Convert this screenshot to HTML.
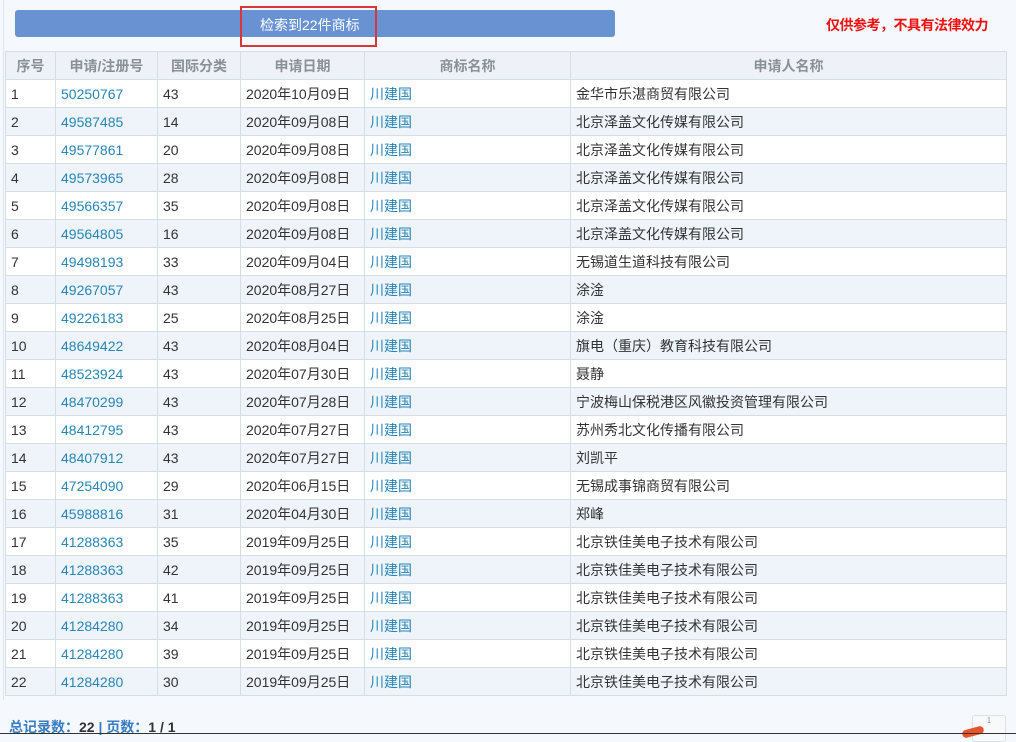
<!DOCTYPE html>
<html><head><meta charset="utf-8"><style>
body{margin:0;width:1016px;height:734px;background:#f5f8fc;font-family:"Liberation Sans","Noto Sans CJK SC",sans-serif;position:relative;overflow:hidden}
.edge{position:absolute;left:3px;top:0;width:1px;height:700px;background:#dfe4ea}
.bar{position:absolute;left:15px;top:10px;width:600px;height:27px;background:#6892d2;border-radius:3px}
.bar span{position:absolute;left:245px;top:5px;color:#fff;font-size:14px}
.rb{position:absolute;left:240px;top:6px;width:133px;height:37px;border:2px solid #d9363a}
.warn{position:absolute;left:826px;top:15px;color:#e11;font-size:14px;font-weight:bold;letter-spacing:-0.5px}
table{position:absolute;left:5px;top:51px;border-collapse:collapse;table-layout:fixed;width:1001px;font-size:14px;color:#333}
td,th{border:1px solid #d5dde6;height:27px;padding:0 0 0 5px;white-space:nowrap;overflow:hidden}
th{background:#eef2f8;color:#8a9099;font-weight:bold;text-align:center;padding:0;height:27px}
tbody tr:nth-child(even) td{background:#eef4fa}
tbody tr:nth-child(odd) td{background:#fff}
td.l{color:#2886b5}
.foot{position:absolute;left:9px;top:717px;font-size:14px;color:#3a7cc0;font-weight:bold}
.foot b{color:#333}
.pg{position:absolute;left:972px;top:715px;width:32px;height:25px;border:1px solid #dde2e8;border-radius:3px;background:#f8f9fb;font-size:8px;color:#999;text-align:center}
.line{position:absolute;left:0;top:733px;width:1016px;height:1px;background:#333}
.or{position:absolute;left:962px;top:728px;width:22px;height:8px;background:#e5542a;border-radius:6px;transform:rotate(-15deg)}
</style></head><body>
<div class="edge"></div>
<div class="bar"><span>检索到22件商标</span></div>
<div class="rb"></div>
<div class="warn">仅供参考，不具有法律效力</div>
<table>
<colgroup><col style="width:50px"><col style="width:102px"><col style="width:83px"><col style="width:124px"><col style="width:206px"><col style="width:436px"></colgroup>
<thead><tr><th>序号</th><th>申请/注册号</th><th>国际分类</th><th>申请日期</th><th>商标名称</th><th>申请人名称</th></tr></thead>
<tbody>
<tr><td>1</td><td class="l">50250767</td><td>43</td><td>2020年10月09日</td><td class="l">川建国</td><td>金华市乐湛商贸有限公司</td></tr>
<tr><td>2</td><td class="l">49587485</td><td>14</td><td>2020年09月08日</td><td class="l">川建国</td><td>北京泽盖文化传媒有限公司</td></tr>
<tr><td>3</td><td class="l">49577861</td><td>20</td><td>2020年09月08日</td><td class="l">川建国</td><td>北京泽盖文化传媒有限公司</td></tr>
<tr><td>4</td><td class="l">49573965</td><td>28</td><td>2020年09月08日</td><td class="l">川建国</td><td>北京泽盖文化传媒有限公司</td></tr>
<tr><td>5</td><td class="l">49566357</td><td>35</td><td>2020年09月08日</td><td class="l">川建国</td><td>北京泽盖文化传媒有限公司</td></tr>
<tr><td>6</td><td class="l">49564805</td><td>16</td><td>2020年09月08日</td><td class="l">川建国</td><td>北京泽盖文化传媒有限公司</td></tr>
<tr><td>7</td><td class="l">49498193</td><td>33</td><td>2020年09月04日</td><td class="l">川建国</td><td>无锡道生道科技有限公司</td></tr>
<tr><td>8</td><td class="l">49267057</td><td>43</td><td>2020年08月27日</td><td class="l">川建国</td><td>涂淦</td></tr>
<tr><td>9</td><td class="l">49226183</td><td>25</td><td>2020年08月25日</td><td class="l">川建国</td><td>涂淦</td></tr>
<tr><td>10</td><td class="l">48649422</td><td>43</td><td>2020年08月04日</td><td class="l">川建国</td><td>旗电（重庆）教育科技有限公司</td></tr>
<tr><td>11</td><td class="l">48523924</td><td>43</td><td>2020年07月30日</td><td class="l">川建国</td><td>聂静</td></tr>
<tr><td>12</td><td class="l">48470299</td><td>43</td><td>2020年07月28日</td><td class="l">川建国</td><td>宁波梅山保税港区风徽投资管理有限公司</td></tr>
<tr><td>13</td><td class="l">48412795</td><td>43</td><td>2020年07月27日</td><td class="l">川建国</td><td>苏州秀北文化传播有限公司</td></tr>
<tr><td>14</td><td class="l">48407912</td><td>43</td><td>2020年07月27日</td><td class="l">川建国</td><td>刘凯平</td></tr>
<tr><td>15</td><td class="l">47254090</td><td>29</td><td>2020年06月15日</td><td class="l">川建国</td><td>无锡成事锦商贸有限公司</td></tr>
<tr><td>16</td><td class="l">45988816</td><td>31</td><td>2020年04月30日</td><td class="l">川建国</td><td>郑峰</td></tr>
<tr><td>17</td><td class="l">41288363</td><td>35</td><td>2019年09月25日</td><td class="l">川建国</td><td>北京铁佳美电子技术有限公司</td></tr>
<tr><td>18</td><td class="l">41288363</td><td>42</td><td>2019年09月25日</td><td class="l">川建国</td><td>北京铁佳美电子技术有限公司</td></tr>
<tr><td>19</td><td class="l">41288363</td><td>41</td><td>2019年09月25日</td><td class="l">川建国</td><td>北京铁佳美电子技术有限公司</td></tr>
<tr><td>20</td><td class="l">41284280</td><td>34</td><td>2019年09月25日</td><td class="l">川建国</td><td>北京铁佳美电子技术有限公司</td></tr>
<tr><td>21</td><td class="l">41284280</td><td>39</td><td>2019年09月25日</td><td class="l">川建国</td><td>北京铁佳美电子技术有限公司</td></tr>
<tr><td>22</td><td class="l">41284280</td><td>30</td><td>2019年09月25日</td><td class="l">川建国</td><td>北京铁佳美电子技术有限公司</td></tr>
</tbody></table>
<div class="foot">总记录数：<b>22</b> | 页数：<b>1 / 1</b></div>
<div class="pg">1</div>
<div class="or"></div>
<div class="line"></div>
</body></html>
